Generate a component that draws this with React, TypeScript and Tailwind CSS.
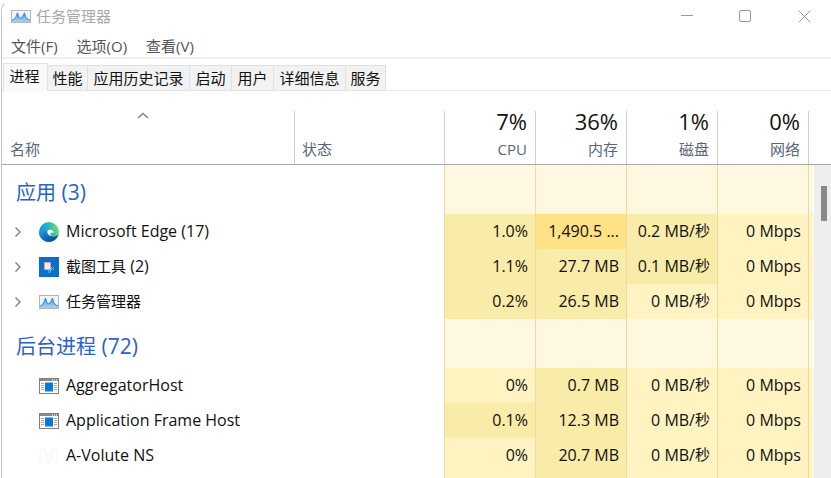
import React from "react";

const TaskIcon = ({ h = 14 }: { h?: number }) => (
  <svg width="20" height={h} viewBox="0 0 20 14" preserveAspectRatio="none" className="shrink-0">
    <defs>
      <linearGradient id="tm" x1="0" y1="0" x2="0" y2="1">
        <stop offset="0" stopColor="#3f9be0" />
        <stop offset="1" stopColor="#a8d4f2" />
      </linearGradient>
    </defs>
    <rect x="0.5" y="0.5" width="19" height="13" fill="#f1f5fa" stroke="#b4b4b4" />
    <path d="M1 13V11L3 10L5 7L6.5 3L8 8L10 9L12 6L13.5 3L15 8L17 10L19 11V13Z" fill="url(#tm)" />
    <path d="M1 11L3 10L5 7L6.5 3L8 8L10 9L12 6L13.5 3L15 8L17 10L19 11" fill="none" stroke="#2a86d8" strokeWidth="0.9" />
  </svg>
);

const EdgeIcon = () => (
  <svg width="20" height="20" viewBox="0 0 20 20" className="shrink-0">
    <defs>
      <linearGradient id="e1" x1="0.05" y1="0.6" x2="1" y2="0.35">
        <stop offset="0" stopColor="#1392d8" />
        <stop offset="0.5" stopColor="#22b8c8" />
        <stop offset="1" stopColor="#7fdc62" />
      </linearGradient>
      <linearGradient id="e2" x1="0" y1="0.1" x2="0.9" y2="0.9">
        <stop offset="0" stopColor="#1f9fe2" />
        <stop offset="0.55" stopColor="#0f68b6" />
        <stop offset="1" stopColor="#0a4592" />
      </linearGradient>
    </defs>
    <circle cx="10" cy="10" r="10" fill="url(#e1)" />
    <path d="M0 10C0 15.5 4.5 20 10 20C14.2 20 17.8 17.4 19.6 12.6C17.5 14.6 15 15 13 14.4C10.4 13.4 8.2 11.6 8.4 9C5 7.5 1 8 0 10Z" fill="url(#e2)" />
    <path d="M8.4 9.2C9 8 10.8 7.5 12.4 7.9C13.8 8.3 14.8 9.4 14.4 10.4C14 11 12.8 11 11.8 10.5C10.9 11.4 11.4 13 12.6 14C10.6 14 8.7 12.6 8.4 10.8Z" fill="#ffffff" />
  </svg>
);

const SnipIcon = () => (
  <svg width="20" height="20" viewBox="0 0 20 20" className="shrink-0">
    <rect width="20" height="20" fill="#0a6fca" />
    <rect x="5" y="5" width="7" height="8" fill="#f4ece6" />
    <rect x="5.5" y="5.5" width="6" height="7" fill="none" stroke="#d8503c" strokeWidth="1" strokeDasharray="1 1" />
    <path d="M11 9L15 13M11 14L15 10" stroke="#7fb8e8" strokeWidth="1" />
    <circle cx="10.5" cy="14.5" r="1" fill="none" stroke="#9cc8ee" strokeWidth="0.8" />
  </svg>
);

const AppIcon = () => (
  <svg width="20" height="16" viewBox="0 0 20 16" className="shrink-0">
    <rect x="0.5" y="0.5" width="19" height="15" fill="#ffffff" stroke="#7f7f7f" />
    <rect x="1" y="1" width="18" height="2" fill="#8a8a8a" />
    <path d="M13 2H14M15 2H16M17 2H18" stroke="#ffffff" strokeWidth="1" />
    <rect x="6" y="4.5" width="8" height="9" fill="#0a78d4" />
    <path d="M2 5.5H5M2 7.5H5M2 9.5H5M2 11.5H5M15 5.5H18M15 7.5H18M15 9.5H18M15 11.5H18" stroke="#a9a9a9" strokeWidth="1" />
  </svg>
);

const FaintIcon = () => (
  <svg width="20" height="20" viewBox="0 0 20 20" className="shrink-0">
    <path d="M1 18V8C1 3 5 2 6.5 5C7.5 7 7.5 17 10 17C12.5 17 12.5 5 14 3C16 1.5 18 4 18 9V17" fill="none" stroke="#f6f6f6" strokeWidth="1.3" />
  </svg>
);

const Chevron = () => (
  <svg width="8" height="12" viewBox="0 0 8 12" className="shrink-0">
    <path d="M1.5 1.5L6 6L1.5 10.5" fill="none" stroke="#7b7b7b" strokeWidth="1.3" />
  </svg>
);

const Mixed = ({ text, cjk }: { text: string; cjk: string }) => (
  <>
    {(text.match(/[\u4e00-\u9fff]+|[^\u4e00-\u9fff]+/g) || []).map((part, i) =>
      /[\u4e00-\u9fff]/.test(part) ? (
        <span key={i} className={cjk}>
          {part}
        </span>
      ) : (
        <span key={i} className="whitespace-pre">
          {part}
        </span>
      )
    )}
  </>
);

const L = "bg-[#fff3c2]";
const M = "bg-[#f9eba8]";
const H = "bg-[#ffe186]";
const S = "bg-[#fff8e1]";

const tabs: [string, string][] = [
  ["性能", "w-[40px]"],
  ["应用历史记录", "w-[102px]"],
  ["启动", "w-[42px]"],
  ["用户", "w-[42px]"],
  ["详细信息", "w-[72px]"],
  ["服务", "w-[40px]"],
];

const heads = [
  ["7%", "CPU"],
  ["36%", "内存"],
  ["1%", "磁盘"],
  ["0%", "网络"],
];

type Row = {
  name: string;
  icon: React.ReactNode;
  chevron?: boolean;
  cells: [string, string][];
};

const apps: Row[] = [
  { name: "Microsoft Edge (17)", icon: <EdgeIcon />, chevron: true, cells: [["1.0%", M], ["1,490.5 ...", H], ["0.2 MB/秒", M], ["0 Mbps", L]] },
  { name: "截图工具 (2)", icon: <SnipIcon />, chevron: true, cells: [["1.1%", M], ["27.7 MB", M], ["0.1 MB/秒", M], ["0 Mbps", L]] },
  { name: "任务管理器", icon: <TaskIcon />, chevron: true, cells: [["0.2%", M], ["26.5 MB", M], ["0 MB/秒", L], ["0 Mbps", L]] },
];

const bg: Row[] = [
  { name: "AggregatorHost", icon: <AppIcon />, cells: [["0%", L], ["0.7 MB", M], ["0 MB/秒", L], ["0 Mbps", L]] },
  { name: "Application Frame Host", icon: <AppIcon />, cells: [["0.1%", M], ["12.3 MB", M], ["0 MB/秒", L], ["0 Mbps", L]] },
  { name: "A-Volute NS", icon: <FaintIcon />, cells: [["0%", L], ["20.7 MB", M], ["0 MB/秒", L], ["0 Mbps", L]] },
];

const Section = ({ title }: { title: string }) => (
  <div className="flex h-[49px]">
    <div className="w-[442px] flex items-center pl-[14px] pt-[6px] text-[21px] text-[#2a62c8] whitespace-nowrap">
      <Mixed text={title} cjk="text-[20px]" />
    </div>
    {[0, 1, 2, 3].map((i) => (
      <div key={i} className={`w-[91px] border-l border-[#ecd9a4] ${S}`} />
    ))}
    <div className={`flex-1 border-l border-[#ecd9a4] ${S}`} />
  </div>
);

const DataRow = ({ row }: { row: Row }) => (
  <div className="flex h-[35px]">
    <div className="w-[442px] flex items-center">
      <div className="w-[37px] flex justify-start pl-[12px]">{row.chevron ? <Chevron /> : null}</div>
      <div className="w-[20px] flex justify-center">{row.icon}</div>
      <div className="ml-[7px] pb-[2px] text-[16px] text-[#111] whitespace-nowrap">
        <Mixed text={row.name} cjk="text-[15px]" />
      </div>
    </div>
    {row.cells.map(([v, c], i) => (
      <div
        key={i}
        className={`w-[91px] flex items-center justify-end pr-[7px] pb-[2px] border-l border-[#ecd9a4] text-[16px] text-[#111] whitespace-nowrap ${c}`}
      >
        <Mixed text={v} cjk="text-[15px]" />
      </div>
    ))}
    <div className={`flex-1 border-l border-[#ecd9a4] ${row.cells[3][1]}`} />
  </div>
);

export default function App() {
  return (
    <div className="w-[831px] h-[478px] overflow-hidden bg-white font-['Open_Sans','Noto_Sans_CJK_SC',sans-serif]">
      <div className="h-[478px] ml-[1px] border-l border-t border-[#c4c4c4] border-t-transparent rounded-tl-[10px] flex flex-col">
        {/* title bar */}
        <div className="h-[34px] flex items-center pl-[9px] pb-[4px] shrink-0">
          <TaskIcon h={13} />
          <span className="ml-[5px] text-[15px] text-[#a8a8a8]">任务管理器</span>
          <div className="ml-auto flex items-center">
            <svg width="12" height="2" viewBox="0 0 12 2" className="mr-[46px]">
              <rect width="12" height="1" fill="#9a9a9a" />
            </svg>
            <svg width="12" height="12" viewBox="0 0 12 12" className="mr-[47px]">
              <rect x="0.5" y="0.5" width="11" height="11" rx="1.5" fill="none" stroke="#9a9a9a" />
            </svg>
            <svg width="13" height="13" viewBox="0 0 13 13" className="mr-[20px]">
              <path d="M0.5 0.5L12.5 12.5M12.5 0.5L0.5 12.5" stroke="#9a9a9a" />
            </svg>
          </div>
        </div>
        {/* menu */}
        <div className="h-[24px] flex items-center pl-[9px] gap-[19px] text-[15px] text-[#555] shrink-0 border-b-2 border-[#f0f0f0]">
          <span>文件(F)</span>
          <span>选项(O)</span>
          <span>查看(V)</span>
        </div>
        {/* tabs */}
        <div className="h-[32px] flex items-end border-b border-[#e4e4e4] shrink-0 pl-[1px]">
          <div className="w-[45px] h-[28px] mb-[-1px] bg-[#f9f9f9] border border-b-0 border-[#e0e0e0] flex items-center justify-center text-[15px] text-[#111] pb-[3px] pr-[2px]">
            进程
          </div>
          {tabs.map(([t, w]) => (
            <div
              key={t}
              className={`${w} h-[25px] bg-[#f2f2f2] border-r border-t border-[#e0e0e0] flex items-center justify-center text-[15px] text-[#111]`}
            >
              {t}
            </div>
          ))}
        </div>
        {/* header */}
        <div className="h-[74px] pt-[20px] shrink-0">
          <div className="h-[54px] flex border-b border-[#a8a8a8]">
            <div className="w-[292px] flex flex-col pl-[8px]">
              <svg width="12" height="7" viewBox="0 0 12 7" className="ml-[127px] mt-[1px]">
                <path d="M1 6L6 1.5L11 6" fill="none" stroke="#7a7f90" strokeWidth="1.4" />
              </svg>
              <div className="mt-auto mb-[4px] text-[15px] text-[#5a6578]">名称</div>
            </div>
            <div className="w-[150px] border-l border-[#cfcfcf] flex items-end pl-[7px] pb-[4px] text-[15px] text-[#5a6578]">状态</div>
            {heads.map(([p, n]) => (
              <div key={n} className="w-[91px] border-l border-[#cfcfcf] flex flex-col items-end pr-[8px]">
                <div className="text-[22px] leading-[20px] text-[#111]">{p}</div>
                <div className="mt-auto mb-[4px] text-[15px] text-[#5a6578]">{n}</div>
              </div>
            ))}
            <div className="w-[5px] border-l border-[#cfcfcf]" />
          </div>
        </div>
        {/* body */}
        <div className="flex-1 flex min-h-0">
          <div className="w-[811px] overflow-hidden">
            <Section title="应用 (3)" />
            {apps.map((r) => (
              <DataRow key={r.name} row={r} />
            ))}
            <Section title="后台进程 (72)" />
            {bg.map((r) => (
              <DataRow key={r.name} row={r} />
            ))}
            <DataRow row={{ name: "", icon: null, cells: [["", L], ["", M], ["", L], ["", L]] }} />
          </div>
          <div className="flex-1 ml-[1px] bg-[#eeeeee] pt-[21px] pl-[7px]">
            <div className="w-[6px] h-[35px] bg-[#8a8a8a]" />
          </div>
        </div>
      </div>
    </div>
  );
}
